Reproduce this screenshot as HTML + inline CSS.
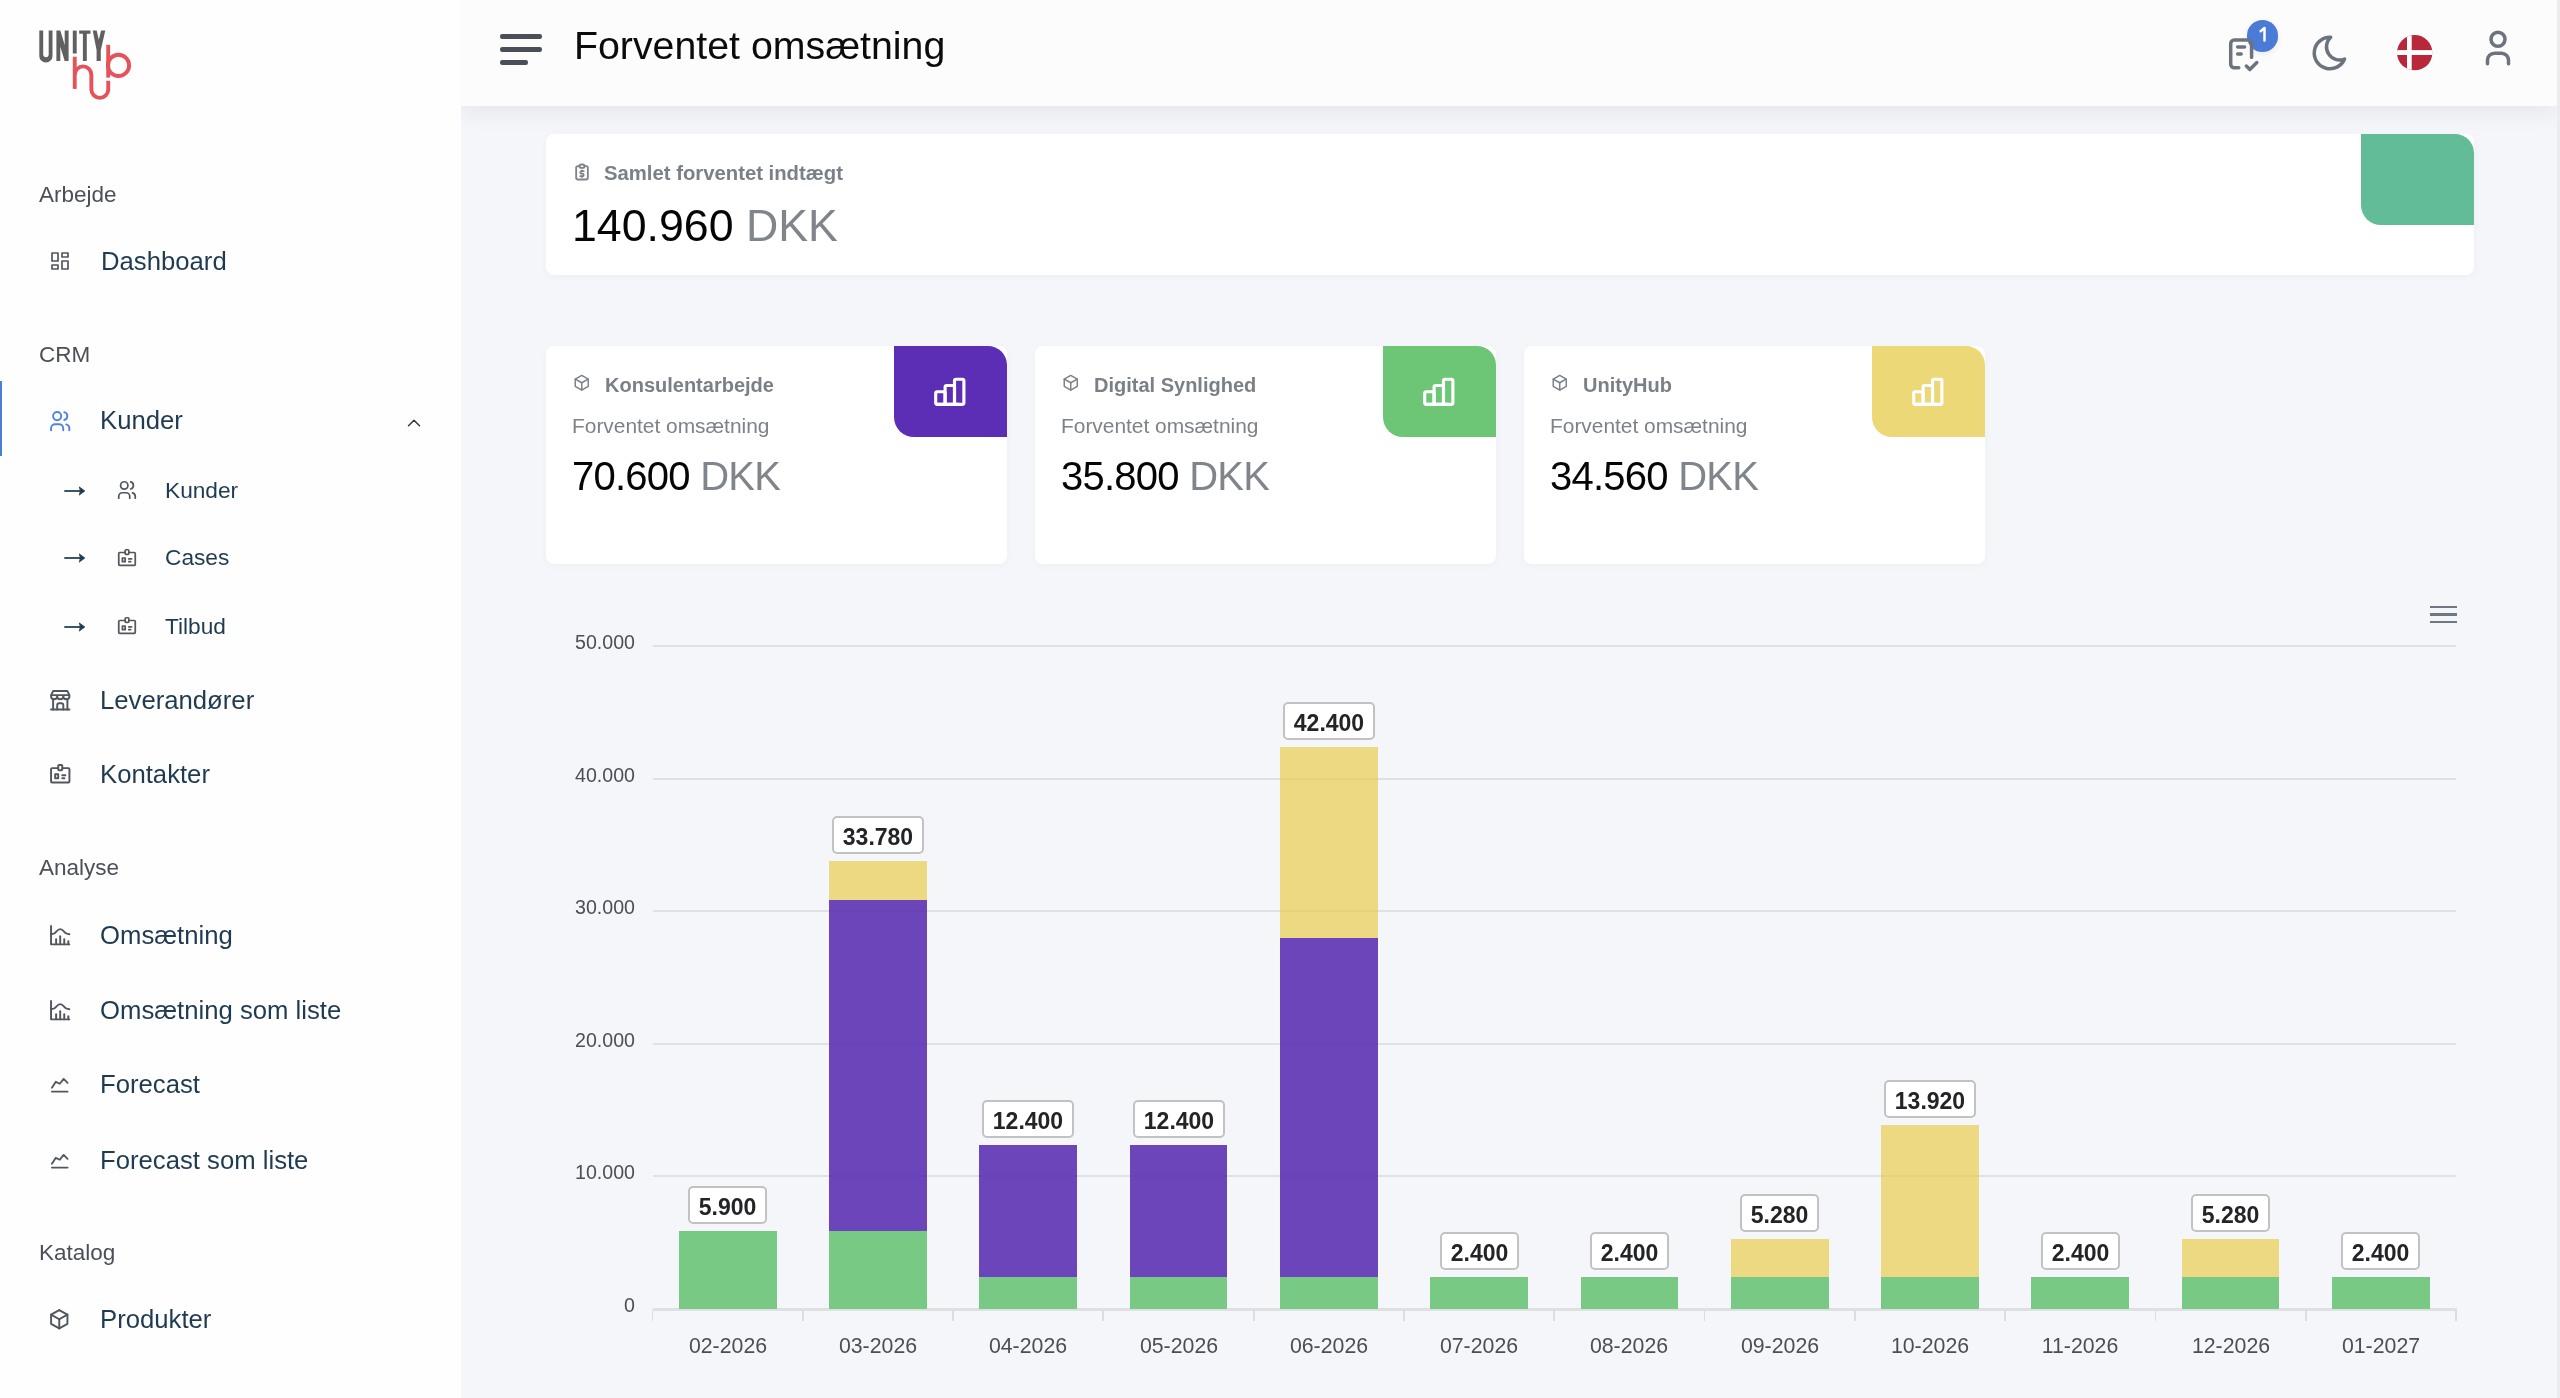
<!DOCTYPE html>
<html><head><meta charset="utf-8"><title>Forventet omsætning</title>
<style>
html,body{margin:0;padding:0}
body{width:2560px;height:1398px;overflow:hidden;position:relative;background:#f5f6fa;font-family:"Liberation Sans",sans-serif}
.t{position:absolute;white-space:nowrap;will-change:transform}
.ic{position:absolute;overflow:visible}
.r{position:absolute;background:#4a4e56;border-radius:2.2px}
#sb{position:absolute;left:0;top:0;width:461px;height:1398px;background:#fefefe;z-index:1}
.t,.ic{z-index:2}
#hd{position:absolute;left:461px;top:0;width:2097px;height:105.5px;background:#fcfcfd;box-shadow:0 9px 20px rgba(30,40,60,0.06)}
.card{position:absolute;background:#fff;border-radius:8px;box-shadow:0 2px 10px rgba(30,40,60,0.03)}
.lbl{position:absolute;will-change:transform;box-sizing:border-box;background:#fff;border:2px solid #c2c2c5;border-radius:5px;font-weight:700;font-size:23px;color:#222428;text-align:center;line-height:36.5px;padding-top:1.2px}
</style></head><body>
<div id="sb"></div>
<svg class="ic" style="left:0;top:0" width="160" height="120" viewBox="0 0 160 120">
<g fill="#625f62">
<path d="M39.3 30.6h3.9v24.5a2.8 2.8 0 0 0 5.5 0v-24.5h3.8v25.3a6.6 6.6 0 0 1 -13.2 0z"/>
<path d="M56.4 30.6h3.9l4.4 14.5v-14.5h3.9v30.3h-3.9l-4.4 -14.2v14.2h-3.9z"/>
<path d="M72.8 30.6h3.9v22.9h-3.9z"/>
<path d="M79.2 30.6h11.3v3.2h-3.7v27.1h-3.9v-27.1h-3.7z"/>
<path d="M92.7 30.6h4l2.1 9.2l2.3 -9.2h4.2l-4.5 19.6v10.7h-4.2v-10.7z"/>
</g>
<g fill="none" stroke="#e5535a" stroke-width="3.9">
<path d="M74.75 56.7v32.2"/>
<path d="M74.75 74.7a8.3 8.3 0 0 1 16.6 0v14.7a8.45 8.45 0 0 0 16.9 0v-8.6"/>
<path d="M108.2 44.8v32.8"/>
<circle cx="118.5" cy="65.4" r="10.6"/>
</g>
</svg>
<div class="t" style="left:39.30px;top:184.25px;font-size:22.5px;line-height:22.5px;color:#4b5058;font-weight:400;">Arbejde</div>
<svg class="ic" style="left:48.00px;top:249.20px;" width="24.00" height="24.00" viewBox="0 0 24 24" fill="none" stroke="#52575e" stroke-width="1.7" stroke-linecap="round" stroke-linejoin="round"><path d="M4 4h6v8h-6z"/><path d="M4 16h6v4h-6z"/><path d="M14 12h6v8h-6z"/><path d="M14 4h6v4h-6z"/></svg>
<div class="t" style="left:100.60px;top:249.04px;font-size:25.7px;line-height:25.7px;color:#1f3b51;font-weight:400;">Dashboard</div>
<div class="t" style="left:39.30px;top:343.55px;font-size:22.5px;line-height:22.5px;color:#4b5058;font-weight:400;">CRM</div>
<div style="position:absolute;z-index:3;left:0;top:381px;width:2.2px;height:75px;background:#4a7fd8"></div>
<svg class="ic" style="left:47.80px;top:408.80px;" width="24.40" height="24.40" viewBox="0 0 24 24" fill="none" stroke="#4f85e0" stroke-width="1.9" stroke-linecap="round" stroke-linejoin="round"><path d="M5 7a4 4 0 1 0 8 0a4 4 0 1 0 -8 0"/><path d="M3 21v-2a4 4 0 0 1 4 -4h4a4 4 0 0 1 4 4v2"/><path d="M16 3.13a4 4 0 0 1 0 7.75"/><path d="M21 21v-2a4 4 0 0 0 -3 -3.85"/></svg>
<div class="t" style="left:99.80px;top:408.34px;font-size:25.7px;line-height:25.7px;color:#1f3b51;font-weight:400;">Kunder</div>
<svg class="ic" style="left:403.20px;top:412.00px;" width="22.00" height="22.00" viewBox="0 0 24 24" fill="none" stroke="#2b3945" stroke-width="1.6" stroke-linecap="round" stroke-linejoin="round"><path d="M6 15l6 -6l6 6"/></svg>
<svg class="ic" style="left:62px;top:483.8px" width="26" height="14" viewBox="0 0 26 14"><path d="M3 7h18" stroke="#3d5366" stroke-width="1.9" stroke-linecap="round"/><path d="M17.3 2.9L22.8 7L17.3 11.1Q19.3 7 17.3 2.9z" fill="#1f3b51" stroke="#1f3b51" stroke-width="0.8" stroke-linejoin="round"/></svg>
<svg class="ic" style="left:116.20px;top:479.40px;" width="22.00" height="22.00" viewBox="0 0 24 24" fill="none" stroke="#52575e" stroke-width="1.9" stroke-linecap="round" stroke-linejoin="round"><path d="M5 7a4 4 0 1 0 8 0a4 4 0 1 0 -8 0"/><path d="M3 21v-2a4 4 0 0 1 4 -4h4a4 4 0 0 1 4 4v2"/><path d="M16 3.13a4 4 0 0 1 0 7.75"/><path d="M21 21v-2a4 4 0 0 0 -3 -3.85"/></svg>
<div class="t" style="left:165.30px;top:479.18px;font-size:22.7px;line-height:22.7px;color:#1f3b51;font-weight:400;">Kunder</div>
<svg class="ic" style="left:62px;top:551.0px" width="26" height="14" viewBox="0 0 26 14"><path d="M3 7h18" stroke="#3d5366" stroke-width="1.9" stroke-linecap="round"/><path d="M17.3 2.9L22.8 7L17.3 11.1Q19.3 7 17.3 2.9z" fill="#1f3b51" stroke="#1f3b51" stroke-width="0.8" stroke-linejoin="round"/></svg>
<svg class="ic" style="left:116.20px;top:546.70px;" width="22.00" height="22.00" viewBox="0 0 24 24" fill="none" stroke="#52575e" stroke-width="1.9" stroke-linecap="round" stroke-linejoin="round"><path d="M7 12h3v4h-3z"/><path d="M10 6h-6a1 1 0 0 0 -1 1v12a1 1 0 0 0 1 1h16a1 1 0 0 0 1 -1v-12a1 1 0 0 0 -1 -1h-6"/><path d="M10 4a1 1 0 0 1 1 -1h2a1 1 0 0 1 1 1v3a1 1 0 0 1 -1 1h-2a1 1 0 0 1 -1 -1z"/><path d="M14 13h3"/><path d="M14 16h2"/></svg>
<div class="t" style="left:165.30px;top:546.38px;font-size:22.7px;line-height:22.7px;color:#1f3b51;font-weight:400;">Cases</div>
<svg class="ic" style="left:62px;top:619.6px" width="26" height="14" viewBox="0 0 26 14"><path d="M3 7h18" stroke="#3d5366" stroke-width="1.9" stroke-linecap="round"/><path d="M17.3 2.9L22.8 7L17.3 11.1Q19.3 7 17.3 2.9z" fill="#1f3b51" stroke="#1f3b51" stroke-width="0.8" stroke-linejoin="round"/></svg>
<svg class="ic" style="left:116.20px;top:615.30px;" width="22.00" height="22.00" viewBox="0 0 24 24" fill="none" stroke="#52575e" stroke-width="1.9" stroke-linecap="round" stroke-linejoin="round"><path d="M7 12h3v4h-3z"/><path d="M10 6h-6a1 1 0 0 0 -1 1v12a1 1 0 0 0 1 1h16a1 1 0 0 0 1 -1v-12a1 1 0 0 0 -1 -1h-6"/><path d="M10 4a1 1 0 0 1 1 -1h2a1 1 0 0 1 1 1v3a1 1 0 0 1 -1 1h-2a1 1 0 0 1 -1 -1z"/><path d="M14 13h3"/><path d="M14 16h2"/></svg>
<div class="t" style="left:165.30px;top:614.98px;font-size:22.7px;line-height:22.7px;color:#1f3b51;font-weight:400;">Tilbud</div>
<svg class="ic" style="left:47.70px;top:687.70px;" width="24.50" height="24.50" viewBox="0 0 24 24" fill="none" stroke="#52575e" stroke-width="1.9" stroke-linecap="round" stroke-linejoin="round"><path d="M3 21l18 0"/><path d="M3 7v1a3 3 0 0 0 6 0v-1m0 1a3 3 0 0 0 6 0v-1m0 1a3 3 0 0 0 6 0v-1h-18l2 -4h14l2 4"/><path d="M5 21l0 -10.15"/><path d="M19 21l0 -10.15"/><path d="M9 21v-4a2 2 0 0 1 2 -2h2a2 2 0 0 1 2 2v4"/></svg>
<div class="t" style="left:100.40px;top:687.64px;font-size:25.7px;line-height:25.7px;color:#1f3b51;font-weight:400;">Leverandører</div>
<svg class="ic" style="left:47.70px;top:762.40px;" width="24.50" height="24.50" viewBox="0 0 24 24" fill="none" stroke="#52575e" stroke-width="1.9" stroke-linecap="round" stroke-linejoin="round"><path d="M7 12h3v4h-3z"/><path d="M10 6h-6a1 1 0 0 0 -1 1v12a1 1 0 0 0 1 1h16a1 1 0 0 0 1 -1v-12a1 1 0 0 0 -1 -1h-6"/><path d="M10 4a1 1 0 0 1 1 -1h2a1 1 0 0 1 1 1v3a1 1 0 0 1 -1 1h-2a1 1 0 0 1 -1 -1z"/><path d="M14 13h3"/><path d="M14 16h2"/></svg>
<div class="t" style="left:100.40px;top:762.34px;font-size:25.7px;line-height:25.7px;color:#1f3b51;font-weight:400;">Kontakter</div>
<div class="t" style="left:39.30px;top:856.75px;font-size:22.5px;line-height:22.5px;color:#4b5058;font-weight:400;">Analyse</div>
<svg class="ic" style="left:47.70px;top:923.00px;" width="24.40" height="24.40" viewBox="0 0 24 24" fill="none" stroke="#52575e" stroke-width="1.9" stroke-linecap="round" stroke-linejoin="round"><path d="M3 3v18h18"/><path d="M20 18v3"/><path d="M16 16v5"/><path d="M12 13v8"/><path d="M8 16v5"/><path d="M3 11c6 0 5 -5 9 -5s3 5 9 5"/></svg>
<div class="t" style="left:100.40px;top:923.04px;font-size:25.7px;line-height:25.7px;color:#1f3b51;font-weight:400;">Omsætning</div>
<svg class="ic" style="left:47.70px;top:997.90px;" width="24.40" height="24.40" viewBox="0 0 24 24" fill="none" stroke="#52575e" stroke-width="1.9" stroke-linecap="round" stroke-linejoin="round"><path d="M3 3v18h18"/><path d="M20 18v3"/><path d="M16 16v5"/><path d="M12 13v8"/><path d="M8 16v5"/><path d="M3 11c6 0 5 -5 9 -5s3 5 9 5"/></svg>
<div class="t" style="left:100.40px;top:997.84px;font-size:25.7px;line-height:25.7px;color:#1f3b51;font-weight:400;">Omsætning som liste</div>
<svg class="ic" style="left:48.30px;top:1072.90px;" width="23.50" height="23.50" viewBox="0 0 24 24" fill="none" stroke="#52575e" stroke-width="1.9" stroke-linecap="round" stroke-linejoin="round"><path d="M4 19l16 0"/><path d="M4 15l4 -6l4 2l4 -5l4 4"/></svg>
<div class="t" style="left:100.40px;top:1072.24px;font-size:25.7px;line-height:25.7px;color:#1f3b51;font-weight:400;">Forecast</div>
<svg class="ic" style="left:48.30px;top:1148.70px;" width="23.50" height="23.50" viewBox="0 0 24 24" fill="none" stroke="#52575e" stroke-width="1.9" stroke-linecap="round" stroke-linejoin="round"><path d="M4 19l16 0"/><path d="M4 15l4 -6l4 2l4 -5l4 4"/></svg>
<div class="t" style="left:100.40px;top:1147.64px;font-size:25.7px;line-height:25.7px;color:#1f3b51;font-weight:400;">Forecast som liste</div>
<div class="t" style="left:39.30px;top:1242.35px;font-size:22.5px;line-height:22.5px;color:#4b5058;font-weight:400;">Katalog</div>
<svg class="ic" style="left:47.40px;top:1307.40px;" width="24.50" height="24.50" viewBox="0 0 24 24" fill="none" stroke="#52575e" stroke-width="1.9" stroke-linecap="round" stroke-linejoin="round"><path d="M12 3l8 4.5l0 9l-8 4.5l-8 -4.5l0 -9l8 -4.5"/><path d="M12 12l8 -4.5"/><path d="M12 12l0 9"/><path d="M12 12l-8 -4.5"/></svg>
<div class="t" style="left:100.40px;top:1307.34px;font-size:25.7px;line-height:25.7px;color:#1f3b51;font-weight:400;">Produkter</div>
<div id="hd"></div>
<div class="r" style="left:500px;top:33.8px;width:42px;height:5.2px"></div>
<div class="r" style="left:500px;top:47.1px;width:42px;height:5.2px"></div>
<div class="r" style="left:500px;top:60.3px;width:28px;height:5.2px"></div>
<div class="t" style="left:573.50px;top:26.03px;font-size:39.3px;line-height:39.3px;color:#0b0b0c;font-weight:400;">Forventet omsætning</div>
<svg class="ic" style="left:2222.00px;top:32.80px;" width="41.80" height="41.80" viewBox="0 0 24 24" fill="none" stroke="#6c737d" stroke-width="2" stroke-linecap="round" stroke-linejoin="round"><path d="M9.615 20h-2.615a2 2 0 0 1 -2 -2v-12a2 2 0 0 1 2 -2h8a2 2 0 0 1 2 2v8"/><path d="M14 19l2 2l4 -4"/><path d="M9 8h4"/><path d="M9 12h2"/></svg>
<div style="position:absolute;left:2246.6px;top:20px;width:31.6px;height:31.6px;border-radius:50%;background:#4a7bd6;box-shadow:0 2px 6px rgba(0,0,0,0.08)"></div>
<svg class="ic" style="left:2250px;top:20px" width="30" height="30" viewBox="2250 20 30 30"><path d="M2264.5 40.6V28.1L2260.6 31.2" fill="none" stroke="#fff" stroke-width="2.5" stroke-linecap="round" stroke-linejoin="round"/></svg>
<svg class="ic" style="left:2309.40px;top:32.40px;" width="42.00" height="42.00" viewBox="0 0 24 24" fill="none" stroke="#6c737d" stroke-width="2" stroke-linecap="round" stroke-linejoin="round"><path d="M12 3c.132 0 .263 0 .393 0a7.5 7.5 0 0 0 7.92 12.446a9 9 0 1 1 -8.313 -12.454z"/></svg>
<svg class="ic" style="left:2397px;top:35.2px" width="35.4" height="35.4" viewBox="0 0 35.4 35.4"><defs><clipPath id="fc"><circle cx="17.7" cy="17.7" r="17.7"/></clipPath></defs><g clip-path="url(#fc)"><rect width="35.4" height="35.4" fill="#b8283a"/><rect x="10" y="0" width="4.7" height="35.4" fill="#fff"/><rect x="0" y="15.1" width="35.4" height="4.9" fill="#fff"/></g></svg>
<svg class="ic" style="left:2477.20px;top:26.60px;" width="42.00" height="42.00" viewBox="0 0 24 24" fill="none" stroke="#6c737d" stroke-width="2" stroke-linecap="round" stroke-linejoin="round"><path d="M8 7a4 4 0 1 0 8 0a4 4 0 0 0 -8 0"/><path d="M6 21v-2a4 4 0 0 1 4 -4h4a4 4 0 0 1 4 4v2"/></svg>
<div style="position:absolute;left:2557px;top:0;width:3px;height:1398px;background:#ececee"></div>
<div class="card" style="left:546px;top:134px;width:1928px;height:141px"></div>
<div style="position:absolute;left:2361px;top:134px;width:113px;height:91px;background:#62bc97;border-radius:0 19px 0 20px"></div>
<svg class="ic" style="left:572.20px;top:161.80px;" width="20.00" height="20.00" viewBox="0 0 24 24" fill="none" stroke="#7f838a" stroke-width="2.2" stroke-linecap="round" stroke-linejoin="round"><path d="M9 5h-2a2 2 0 0 0 -2 2v12a2 2 0 0 0 2 2h10a2 2 0 0 0 2 -2v-12a2 2 0 0 0 -2 -2h-2"/><path d="M9 5a2 2 0 0 1 2 -2h2a2 2 0 0 1 2 2v0a2 2 0 0 1 -2 2h-2a2 2 0 0 1 -2 -2z"/><path d="M14 11h-2.5a1.5 1.5 0 0 0 0 3h1a1.5 1.5 0 0 1 0 3h-2.5"/><path d="M12 17v1m0 -8v1"/></svg>
<div class="t" style="left:604.00px;top:163.12px;font-size:20.3px;line-height:20.3px;color:#7b8088;font-weight:700;">Samlet forventet indtægt</div>
<div class="t" style="left:572.00px;top:204.21px;font-size:44.7px;line-height:44.7px;color:#050505;font-weight:400;">140.960 <span style="color:#80858c">DKK</span></div>
<div class="card" style="left:546px;top:346px;width:461px;height:218px"></div>
<div style="position:absolute;left:894.3px;top:346px;width:112.7px;height:91.4px;background:#5c2eb5;border-radius:0 19px 0 20px"></div>
<svg class="ic" style="left:930.90px;top:372.80px;" width="37.60" height="37.60" viewBox="0 0 24 24" fill="none" stroke="#ffffff" stroke-width="2" stroke-linecap="round" stroke-linejoin="round"><path d="M3 13a1 1 0 0 1 1 -1h4a1 1 0 0 1 1 1v6a1 1 0 0 1 -1 1h-4a1 1 0 0 1 -1 -1z"/><path d="M9 9a1 1 0 0 1 1 -1h4a1 1 0 0 1 1 1v10a1 1 0 0 1 -1 1h-4a1 1 0 0 1 -1 -1z"/><path d="M15 5a1 1 0 0 1 1 -1h4a1 1 0 0 1 1 1v14a1 1 0 0 1 -1 1h-4a1 1 0 0 1 -1 -1z"/><path d="M4 20l14 0"/></svg>
<svg class="ic" style="left:572.40px;top:373.40px;" width="19.50" height="19.50" viewBox="0 0 24 24" fill="none" stroke="#7b8088" stroke-width="1.8" stroke-linecap="round" stroke-linejoin="round"><path d="M12 3l8 4.5l0 9l-8 4.5l-8 -4.5l0 -9l8 -4.5"/><path d="M12 12l8 -4.5"/><path d="M12 12l0 9"/><path d="M12 12l-8 -4.5"/></svg>
<div class="t" style="left:604.50px;top:375.37px;font-size:20px;line-height:20px;color:#7b8088;font-weight:700;">Konsulentarbejde</div>
<div class="t" style="left:572.30px;top:416.21px;font-size:20.9px;line-height:20.9px;color:#7d8188;font-weight:400;">Forventet omsætning</div>
<div class="t" style="left:571.50px;top:455.94px;font-size:40px;line-height:40px;color:#050505;font-weight:400;letter-spacing:-0.75px;">70.600 <span style="color:#80858c">DKK</span></div>
<div class="card" style="left:1035px;top:346px;width:461px;height:218px"></div>
<div style="position:absolute;left:1383.3px;top:346px;width:112.7px;height:91.4px;background:#6cc675;border-radius:0 19px 0 20px"></div>
<svg class="ic" style="left:1419.90px;top:372.80px;" width="37.60" height="37.60" viewBox="0 0 24 24" fill="none" stroke="#ffffff" stroke-width="2" stroke-linecap="round" stroke-linejoin="round"><path d="M3 13a1 1 0 0 1 1 -1h4a1 1 0 0 1 1 1v6a1 1 0 0 1 -1 1h-4a1 1 0 0 1 -1 -1z"/><path d="M9 9a1 1 0 0 1 1 -1h4a1 1 0 0 1 1 1v10a1 1 0 0 1 -1 1h-4a1 1 0 0 1 -1 -1z"/><path d="M15 5a1 1 0 0 1 1 -1h4a1 1 0 0 1 1 1v14a1 1 0 0 1 -1 1h-4a1 1 0 0 1 -1 -1z"/><path d="M4 20l14 0"/></svg>
<svg class="ic" style="left:1061.40px;top:373.40px;" width="19.50" height="19.50" viewBox="0 0 24 24" fill="none" stroke="#7b8088" stroke-width="1.8" stroke-linecap="round" stroke-linejoin="round"><path d="M12 3l8 4.5l0 9l-8 4.5l-8 -4.5l0 -9l8 -4.5"/><path d="M12 12l8 -4.5"/><path d="M12 12l0 9"/><path d="M12 12l-8 -4.5"/></svg>
<div class="t" style="left:1093.50px;top:375.37px;font-size:20px;line-height:20px;color:#7b8088;font-weight:700;">Digital Synlighed</div>
<div class="t" style="left:1061.30px;top:416.21px;font-size:20.9px;line-height:20.9px;color:#7d8188;font-weight:400;">Forventet omsætning</div>
<div class="t" style="left:1060.50px;top:455.94px;font-size:40px;line-height:40px;color:#050505;font-weight:400;letter-spacing:-0.75px;">35.800 <span style="color:#80858c">DKK</span></div>
<div class="card" style="left:1524px;top:346px;width:461px;height:218px"></div>
<div style="position:absolute;left:1872.3px;top:346px;width:112.7px;height:91.4px;background:#ecd877;border-radius:0 19px 0 20px"></div>
<svg class="ic" style="left:1908.90px;top:372.80px;" width="37.60" height="37.60" viewBox="0 0 24 24" fill="none" stroke="#ffffff" stroke-width="2" stroke-linecap="round" stroke-linejoin="round"><path d="M3 13a1 1 0 0 1 1 -1h4a1 1 0 0 1 1 1v6a1 1 0 0 1 -1 1h-4a1 1 0 0 1 -1 -1z"/><path d="M9 9a1 1 0 0 1 1 -1h4a1 1 0 0 1 1 1v10a1 1 0 0 1 -1 1h-4a1 1 0 0 1 -1 -1z"/><path d="M15 5a1 1 0 0 1 1 -1h4a1 1 0 0 1 1 1v14a1 1 0 0 1 -1 1h-4a1 1 0 0 1 -1 -1z"/><path d="M4 20l14 0"/></svg>
<svg class="ic" style="left:1550.40px;top:373.40px;" width="19.50" height="19.50" viewBox="0 0 24 24" fill="none" stroke="#7b8088" stroke-width="1.8" stroke-linecap="round" stroke-linejoin="round"><path d="M12 3l8 4.5l0 9l-8 4.5l-8 -4.5l0 -9l8 -4.5"/><path d="M12 12l8 -4.5"/><path d="M12 12l0 9"/><path d="M12 12l-8 -4.5"/></svg>
<div class="t" style="left:1582.50px;top:375.37px;font-size:20px;line-height:20px;color:#7b8088;font-weight:700;">UnityHub</div>
<div class="t" style="left:1550.30px;top:416.21px;font-size:20.9px;line-height:20.9px;color:#7d8188;font-weight:400;">Forventet omsætning</div>
<div class="t" style="left:1549.50px;top:455.94px;font-size:40px;line-height:40px;color:#050505;font-weight:400;letter-spacing:-0.75px;">34.560 <span style="color:#80858c">DKK</span></div>
<div style="position:absolute;left:652.5px;top:1175.30px;width:1803.5px;height:2px;background:#e8e9ec"></div>
<div class="t" style="left:575.00px;top:1163.01px;font-size:19.6px;line-height:19.6px;color:#4a4f56;font-weight:400;width:60px;text-align:right;">10.000</div>
<div style="position:absolute;left:652.5px;top:1042.80px;width:1803.5px;height:2px;background:#e8e9ec"></div>
<div class="t" style="left:575.00px;top:1030.51px;font-size:19.6px;line-height:19.6px;color:#4a4f56;font-weight:400;width:60px;text-align:right;">20.000</div>
<div style="position:absolute;left:652.5px;top:910.30px;width:1803.5px;height:2px;background:#e8e9ec"></div>
<div class="t" style="left:575.00px;top:898.01px;font-size:19.6px;line-height:19.6px;color:#4a4f56;font-weight:400;width:60px;text-align:right;">30.000</div>
<div style="position:absolute;left:652.5px;top:777.80px;width:1803.5px;height:2px;background:#e8e9ec"></div>
<div class="t" style="left:575.00px;top:765.51px;font-size:19.6px;line-height:19.6px;color:#4a4f56;font-weight:400;width:60px;text-align:right;">40.000</div>
<div style="position:absolute;left:652.5px;top:645.30px;width:1803.5px;height:2px;background:#e8e9ec"></div>
<div class="t" style="left:575.00px;top:633.01px;font-size:19.6px;line-height:19.6px;color:#4a4f56;font-weight:400;width:60px;text-align:right;">50.000</div>
<div class="t" style="left:574.60px;top:1295.51px;font-size:19.6px;line-height:19.6px;color:#4a4f56;font-weight:400;width:60px;text-align:right;">0</div>
<div style="position:absolute;left:652.5px;top:1308.4px;width:1804.5px;height:2.8px;background:#dfe0e2"></div>
<div style="position:absolute;left:651.60px;top:1310.0px;width:1.8px;height:11px;background:#dcdde0"></div>
<div style="position:absolute;left:801.89px;top:1310.0px;width:1.8px;height:11px;background:#dcdde0"></div>
<div style="position:absolute;left:952.18px;top:1310.0px;width:1.8px;height:11px;background:#dcdde0"></div>
<div style="position:absolute;left:1102.47px;top:1310.0px;width:1.8px;height:11px;background:#dcdde0"></div>
<div style="position:absolute;left:1252.77px;top:1310.0px;width:1.8px;height:11px;background:#dcdde0"></div>
<div style="position:absolute;left:1403.06px;top:1310.0px;width:1.8px;height:11px;background:#dcdde0"></div>
<div style="position:absolute;left:1553.35px;top:1310.0px;width:1.8px;height:11px;background:#dcdde0"></div>
<div style="position:absolute;left:1703.64px;top:1310.0px;width:1.8px;height:11px;background:#dcdde0"></div>
<div style="position:absolute;left:1853.93px;top:1310.0px;width:1.8px;height:11px;background:#dcdde0"></div>
<div style="position:absolute;left:2004.22px;top:1310.0px;width:1.8px;height:11px;background:#dcdde0"></div>
<div style="position:absolute;left:2154.52px;top:1310.0px;width:1.8px;height:11px;background:#dcdde0"></div>
<div style="position:absolute;left:2304.81px;top:1310.0px;width:1.8px;height:11px;background:#dcdde0"></div>
<div style="position:absolute;left:2455.10px;top:1310.0px;width:1.8px;height:11px;background:#dcdde0"></div>
<div style="position:absolute;left:678.75px;top:1230.83px;width:97.8px;height:78.17px;background:#77c983"></div>
<div class="lbl" style="left:688.15px;top:1185.83px;width:79px;height:37.6px">5.900</div>
<div class="t" style="left:667.65px;top:1335.77px;font-size:21.3px;line-height:21.3px;color:#4a4f56;font-weight:400;width:120px;text-align:center;">02-2026</div>
<div style="position:absolute;left:829.04px;top:1230.83px;width:97.8px;height:78.17px;background:#77c983"></div>
<div style="position:absolute;left:829.04px;top:899.58px;width:97.8px;height:331.25px;background:#6c45ba"></div>
<div style="position:absolute;left:829.04px;top:861.41px;width:97.8px;height:38.16px;background:#ecd982"></div>
<div class="lbl" style="left:831.94px;top:816.41px;width:92px;height:37.6px">33.780</div>
<div class="t" style="left:817.94px;top:1335.77px;font-size:21.3px;line-height:21.3px;color:#4a4f56;font-weight:400;width:120px;text-align:center;">03-2026</div>
<div style="position:absolute;left:979.33px;top:1277.20px;width:97.8px;height:31.80px;background:#77c983"></div>
<div style="position:absolute;left:979.33px;top:1144.70px;width:97.8px;height:132.50px;background:#6c45ba"></div>
<div class="lbl" style="left:982.23px;top:1099.70px;width:92px;height:37.6px">12.400</div>
<div class="t" style="left:968.23px;top:1335.77px;font-size:21.3px;line-height:21.3px;color:#4a4f56;font-weight:400;width:120px;text-align:center;">04-2026</div>
<div style="position:absolute;left:1129.62px;top:1277.20px;width:97.8px;height:31.80px;background:#77c983"></div>
<div style="position:absolute;left:1129.62px;top:1144.70px;width:97.8px;height:132.50px;background:#6c45ba"></div>
<div class="lbl" style="left:1132.52px;top:1099.70px;width:92px;height:37.6px">12.400</div>
<div class="t" style="left:1118.52px;top:1335.77px;font-size:21.3px;line-height:21.3px;color:#4a4f56;font-weight:400;width:120px;text-align:center;">05-2026</div>
<div style="position:absolute;left:1279.91px;top:1277.20px;width:97.8px;height:31.80px;background:#77c983"></div>
<div style="position:absolute;left:1279.91px;top:938.00px;width:97.8px;height:339.20px;background:#6c45ba"></div>
<div style="position:absolute;left:1279.91px;top:747.20px;width:97.8px;height:190.80px;background:#ecd982"></div>
<div class="lbl" style="left:1282.81px;top:702.20px;width:92px;height:37.6px">42.400</div>
<div class="t" style="left:1268.81px;top:1335.77px;font-size:21.3px;line-height:21.3px;color:#4a4f56;font-weight:400;width:120px;text-align:center;">06-2026</div>
<div style="position:absolute;left:1430.20px;top:1277.20px;width:97.8px;height:31.80px;background:#77c983"></div>
<div class="lbl" style="left:1439.60px;top:1232.20px;width:79px;height:37.6px">2.400</div>
<div class="t" style="left:1419.10px;top:1335.77px;font-size:21.3px;line-height:21.3px;color:#4a4f56;font-weight:400;width:120px;text-align:center;">07-2026</div>
<div style="position:absolute;left:1580.50px;top:1277.20px;width:97.8px;height:31.80px;background:#77c983"></div>
<div class="lbl" style="left:1589.90px;top:1232.20px;width:79px;height:37.6px">2.400</div>
<div class="t" style="left:1569.40px;top:1335.77px;font-size:21.3px;line-height:21.3px;color:#4a4f56;font-weight:400;width:120px;text-align:center;">08-2026</div>
<div style="position:absolute;left:1730.79px;top:1277.20px;width:97.8px;height:31.80px;background:#77c983"></div>
<div style="position:absolute;left:1730.79px;top:1239.04px;width:97.8px;height:38.16px;background:#ecd982"></div>
<div class="lbl" style="left:1740.19px;top:1194.04px;width:79px;height:37.6px">5.280</div>
<div class="t" style="left:1719.69px;top:1335.77px;font-size:21.3px;line-height:21.3px;color:#4a4f56;font-weight:400;width:120px;text-align:center;">09-2026</div>
<div style="position:absolute;left:1881.08px;top:1277.20px;width:97.8px;height:31.80px;background:#77c983"></div>
<div style="position:absolute;left:1881.08px;top:1124.56px;width:97.8px;height:152.64px;background:#ecd982"></div>
<div class="lbl" style="left:1883.98px;top:1079.56px;width:92px;height:37.6px">13.920</div>
<div class="t" style="left:1869.98px;top:1335.77px;font-size:21.3px;line-height:21.3px;color:#4a4f56;font-weight:400;width:120px;text-align:center;">10-2026</div>
<div style="position:absolute;left:2031.37px;top:1277.20px;width:97.8px;height:31.80px;background:#77c983"></div>
<div class="lbl" style="left:2040.77px;top:1232.20px;width:79px;height:37.6px">2.400</div>
<div class="t" style="left:2020.27px;top:1335.77px;font-size:21.3px;line-height:21.3px;color:#4a4f56;font-weight:400;width:120px;text-align:center;">11-2026</div>
<div style="position:absolute;left:2181.66px;top:1277.20px;width:97.8px;height:31.80px;background:#77c983"></div>
<div style="position:absolute;left:2181.66px;top:1239.04px;width:97.8px;height:38.16px;background:#ecd982"></div>
<div class="lbl" style="left:2191.06px;top:1194.04px;width:79px;height:37.6px">5.280</div>
<div class="t" style="left:2170.56px;top:1335.77px;font-size:21.3px;line-height:21.3px;color:#4a4f56;font-weight:400;width:120px;text-align:center;">12-2026</div>
<div style="position:absolute;left:2331.95px;top:1277.20px;width:97.8px;height:31.80px;background:#77c983"></div>
<div class="lbl" style="left:2341.35px;top:1232.20px;width:79px;height:37.6px">2.400</div>
<div class="t" style="left:2320.85px;top:1335.77px;font-size:21.3px;line-height:21.3px;color:#4a4f56;font-weight:400;width:120px;text-align:center;">01-2027</div>
<div style="position:absolute;left:652.5px;top:1175.30px;width:1803.5px;height:2px;background:rgba(40,40,60,0.035)"></div>
<div style="position:absolute;left:652.5px;top:1042.80px;width:1803.5px;height:2px;background:rgba(40,40,60,0.035)"></div>
<div style="position:absolute;left:652.5px;top:910.30px;width:1803.5px;height:2px;background:rgba(40,40,60,0.035)"></div>
<div style="position:absolute;left:652.5px;top:777.80px;width:1803.5px;height:2px;background:rgba(40,40,60,0.035)"></div>
<div style="position:absolute;left:652.5px;top:645.30px;width:1803.5px;height:2px;background:rgba(40,40,60,0.035)"></div>
<div style="position:absolute;left:2429.5px;top:605.5px;width:27px;height:2.6px;background:#6e7883"></div>
<div style="position:absolute;left:2429.5px;top:613.1px;width:27px;height:2.6px;background:#6e7883"></div>
<div style="position:absolute;left:2429.5px;top:620.7px;width:27px;height:2.6px;background:#6e7883"></div>
</body></html>
